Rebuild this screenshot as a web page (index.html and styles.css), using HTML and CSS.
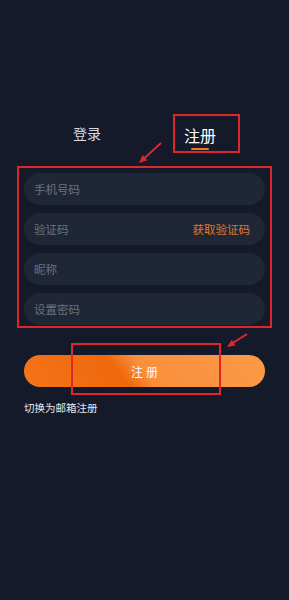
FILE: index.html
```html
<!DOCTYPE html>
<html lang="zh-CN">
<head>
<meta charset="utf-8">
<title>注册</title>
<link rel="stylesheet" href="styles.css">
</head>
<body>
<div class="screen">
  <div class="tabs">
    <div class="tab">登录</div>
    <div class="tab tab-active">
      <span class="tab-label">注册</span>
      <span class="tab-line"></span>
    </div>
  </div>

  <form class="form">
    <div class="field"><input class="field-input" placeholder="手机号码"></div>
    <div class="field">
      <input class="field-input" placeholder="验证码">
      <span class="code-btn">获取验证码</span>
    </div>
    <div class="field"><input class="field-input" placeholder="昵称"></div>
    <div class="field"><input class="field-input" type="password" placeholder="设置密码"></div>
  </form>

  <div class="submit">注册</div>
  <div class="switch">切换为邮箱注册</div>

  <div class="mark mark-tab"></div>
  <div class="mark mark-form"></div>
  <div class="mark mark-btn"></div>
  <svg class="arrows" width="289" height="600" viewBox="0 0 289 600">
    <line x1="161" y1="143" x2="143.5" y2="159" stroke="#e0262d" stroke-width="2"/>
    <polygon points="139,163 147.3,160.2 142.5,155" fill="#e0262d"/>
    <line x1="247" y1="334" x2="231" y2="344.2" stroke="#e0262d" stroke-width="2"/>
    <polygon points="227,347 235.6,345.5 231.8,339.7" fill="#e0262d"/>
  </svg>
</div>
</body>
</html>
```

FILE: styles.css
```css
* { box-sizing: border-box; }
html, body {
  margin: 0;
  padding: 0;
  background: #141a2a;
}
body {
  font-family: "Noto Sans CJK SC", "Noto Sans", sans-serif;
}
.screen {
  position: relative;
  min-height: 600px;
  padding: 123px 24px 0;
}
.tabs {
  display: flex;
  align-items: flex-start;
  padding-left: 49px;
}
.tab {
  font-size: 14px;
  line-height: 20px;
  color: #d9dce2;
}
.tab-active {
  margin-left: 83px;
  margin-top: 1.5px;
  display: flex;
  flex-direction: column;
  align-items: center;
}
.tab-label {
  font-size: 16px;
  line-height: 20px;
  color: #ffffff;
}
.tab-line {
  width: 18px;
  height: 2px;
  margin-top: 3.5px;
  background: #f07a1c;
  border-radius: 1px;
}
.form {
  margin: 23px 0 0;
  display: flex;
  flex-direction: column;
  gap: 8px;
}
.field {
  height: 32px;
  border-radius: 16px;
  background: #1f2737;
  display: flex;
  align-items: center;
  padding: 0 15px 0 10px;
}
.field-input {
  flex: 1;
  min-width: 0;
  border: 0;
  outline: 0;
  background: transparent;
  padding: 0;
  font-family: inherit;
  font-size: 11.5px;
  color: #d9dce2;
}
.field-input::placeholder {
  color: #6c7280;
}
.code-btn {
  font-size: 11.5px;
  color: #e2782a;
  white-space: nowrap;
}
.submit {
  margin-top: 30px;
  height: 32px;
  border-radius: 16px;
  background: linear-gradient(52deg, #f5741a 0%, #ef680b 40%, #f98f3c 50%, #fb9a46 100%);
  color: #ffffff;
  font-size: 12px;
  letter-spacing: 3px;
  text-indent: 3px;
  display: flex;
  align-items: center;
  justify-content: center;
}
.switch {
  margin-top: 14px;
  font-size: 10.5px;
  line-height: 14px;
  color: #e6e8ec;
}
.mark {
  position: absolute;
  border: 2px solid #e0262d;
  pointer-events: none;
}
.mark-tab { left: 173px; top: 114px; width: 67px; height: 39px; }
.mark-form { left: 17px; top: 166px; width: 255px; height: 162px; }
.mark-btn { left: 71px; top: 343px; width: 150px; height: 52px; }
.arrows {
  position: absolute;
  left: 0;
  top: 0;
  pointer-events: none;
}
```
